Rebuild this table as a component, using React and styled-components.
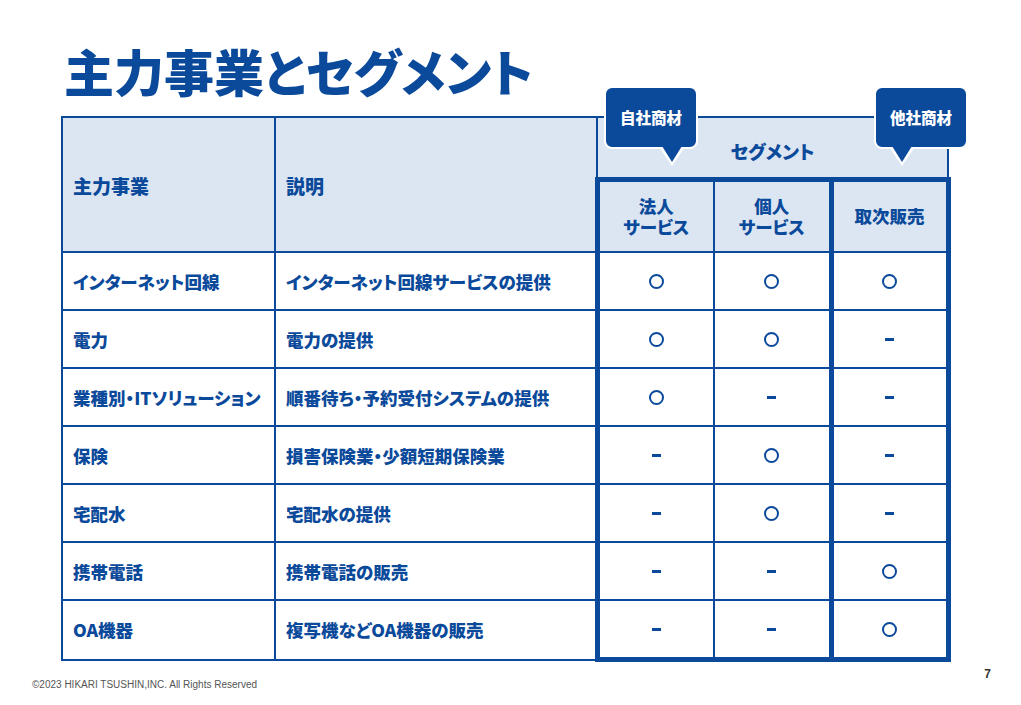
import React from 'react';
import styled, { createGlobalStyle } from 'styled-components';

const BLUE = '#0b4a9b';
const HEAD_BG = '#dce6f2';
const THICK = '5px';
const THIN = '2px';

const rows = [
  ['インターネット回線', 'インターネット回線サービスの提供', 'o', 'o', 'o'],
  ['電力', '電力の提供', 'o', 'o', '-'],
  ['業種別・ITソリューション', '順番待ち・予約受付システムの提供', 'o', '-', '-'],
  ['保険', '損害保険業・少額短期保険業', '-', 'o', '-'],
  ['宅配水', '宅配水の提供', '-', 'o', '-'],
  ['携帯電話', '携帯電話の販売', '-', '-', 'o'],
  ['OA機器', '複写機などOA機器の販売', '-', '-', 'o'],
];

const Mark = ({ v }) => (v === 'o' ? <Circle aria-label="○" /> : <Dash aria-label="－" />);

const App = () => {
  return (
    <Page>
      <GlobalStyle />
      <Title>主力事業とセグメント</Title>
      <TableWrap>
        <Table>
          <colgroup>
            <col style={{ width: 213 }} />
            <col style={{ width: 322 }} />
            <col style={{ width: 117 }} />
            <col style={{ width: 117 }} />
            <col style={{ width: 117 }} />
          </colgroup>
          <thead>
            <tr>
              <HeadCell rowSpan={2}>主力事業</HeadCell>
              <HeadCell rowSpan={2}>説明</HeadCell>
              <SegmentCell colSpan={3}>
                <Callout $left="6px" $tip="66px">自社商材</Callout>
                <Callout $left="276px" $tip="26px">他社商材</Callout>
                セグメント
              </SegmentCell>
            </tr>
            <tr>
              <SubHead $thickLeft><Line>法人</Line><Line>サービス</Line></SubHead>
              <SubHead $thickRight><Line>個人</Line><Line>サービス</Line></SubHead>
              <SubHead $thickRight>取次販売</SubHead>
            </tr>
          </thead>
          <tbody>
            {rows.map((r, i) => {
              const last = i === rows.length - 1;
              return (
                <tr key={r[0]}>
                  <TextCell>{r[0]}</TextCell>
                  <TextCell>{r[1]}</TextCell>
                  <MarkCell $thickLeft $thickBottom={last}><Mark v={r[2]} /></MarkCell>
                  <MarkCell $thickRight $thickBottom={last}><Mark v={r[3]} /></MarkCell>
                  <MarkCell $thickRight $thickBottom={last}><Mark v={r[4]} /></MarkCell>
                </tr>
              );
            })}
          </tbody>
        </Table>
      </TableWrap>
      <Footer>
        <Copy>©2023 HIKARI TSUSHIN,INC. All Rights Reserved</Copy>
        <PageNo>7</PageNo>
      </Footer>
    </Page>
  );
};

export default App;

const GlobalStyle = createGlobalStyle`
  html, body {
    margin: 0;
    padding: 0;
    background: #fff;
  }
  body {
    font-family: "Noto Sans CJK JP", "Noto Sans", sans-serif;
  }
`;

const Page = styled.div`
  width: 1021px;
  height: 705px;
  display: flex;
  flex-direction: column;
  overflow: hidden;
  font-feature-settings: "palt";
`;

const Title = styled.h1`
  margin: 40px 0 0 64px;
  font-size: 50px;
  line-height: 60px;
  font-weight: 900;
  color: ${BLUE};
`;

const TableWrap = styled.div`
  margin: 16px 0 0 61px;
`;

const Table = styled.table`
  border-collapse: collapse;
  table-layout: fixed;
  width: 886px;
  color: ${BLUE};
  font-weight: 900;
`;

const cellBorders = ({ $thickLeft, $thickRight, $thickBottom }) => `
  border-left: ${$thickLeft ? THICK : THIN} solid ${BLUE};
  border-right: ${$thickRight ? THICK : THIN} solid ${BLUE};
  border-bottom: ${$thickBottom ? THICK : THIN} solid ${BLUE};
`;

const HeadCell = styled.th`
  background: ${HEAD_BG};
  border: ${THIN} solid ${BLUE};
  text-align: left;
  vertical-align: middle;
  padding: 2px 0 0 10px;
  font-size: 19px;
  font-weight: 900;
`;

const SegmentCell = styled.th`
  position: relative;
  height: 53px;
  background: ${HEAD_BG};
  border: ${THIN} solid ${BLUE};
  border-bottom: ${THICK} solid ${BLUE};
  font-size: 18.5px;
  font-weight: 900;
  padding: 6px 0 0;
  vertical-align: middle;
`;

const Callout = styled.div`
  position: absolute;
  top: -32px;
  left: ${(p) => p.$left};
  width: 90px;
  height: 57px;
  box-sizing: content-box;
  border: 2px solid #fff;
  border-radius: 8px;
  background: ${BLUE};
  color: #fff;
  font-size: 15.5px;
  font-weight: 900;
  display: flex;
  align-items: center;
  justify-content: center;
  padding-bottom: 2px;
  z-index: 2;

  &::before {
    content: "";
    position: absolute;
    top: 100%;
    left: calc(${(p) => p.$tip} - 13px);
    border-left: 13px solid transparent;
    border-right: 13px solid transparent;
    border-top: 19px solid #fff;
  }
  &::after {
    content: "";
    position: absolute;
    top: calc(100% - 1px);
    left: calc(${(p) => p.$tip} - 10px);
    border-left: 10px solid transparent;
    border-right: 10px solid transparent;
    border-top: 16px solid ${BLUE};
  }
`;

const SubHead = styled.th`
  height: 67px;
  background: ${HEAD_BG};
  border-top: ${THICK} solid ${BLUE};
  ${cellBorders};
  font-size: 17.5px;
  font-weight: 900;
  text-align: center;
  vertical-align: middle;
  padding: 0 0 2px;
`;

const Line = styled.span`
  display: block;
  height: 21px;
  line-height: 21px;
`;

const TextCell = styled.td`
  height: 56px;
  border: ${THIN} solid ${BLUE};
  padding: 0 0 0 10px;
  font-size: 17.5px;
  white-space: nowrap;
  vertical-align: middle;
`;

const MarkCell = styled.td`
  height: 56px;
  ${cellBorders};
  border-top: ${THIN} solid ${BLUE};
  text-align: center;
  vertical-align: middle;
  padding: 0;
  font-size: 0;
`;

const Circle = styled.span`
  display: inline-block;
  width: 15px;
  height: 15px;
  box-sizing: border-box;
  border: 2.6px solid ${BLUE};
  border-radius: 50%;
`;

const Dash = styled.span`
  display: inline-block;
  width: 9px;
  height: 3px;
  background: ${BLUE};
`;

const Footer = styled.div`
  display: flex;
  justify-content: space-between;
  align-items: flex-start;
  padding: 0 30px 0 32px;
`;

const Copy = styled.div`
  margin-top: 17px;
  font-family: "Liberation Sans", Arial, sans-serif;
  font-size: 10px;
  color: #555;
`;

const PageNo = styled.div`
  margin-top: 5px;
  font-family: "Liberation Sans", Arial, sans-serif;
  font-size: 12px;
  font-weight: 700;
  color: #333;
`;
